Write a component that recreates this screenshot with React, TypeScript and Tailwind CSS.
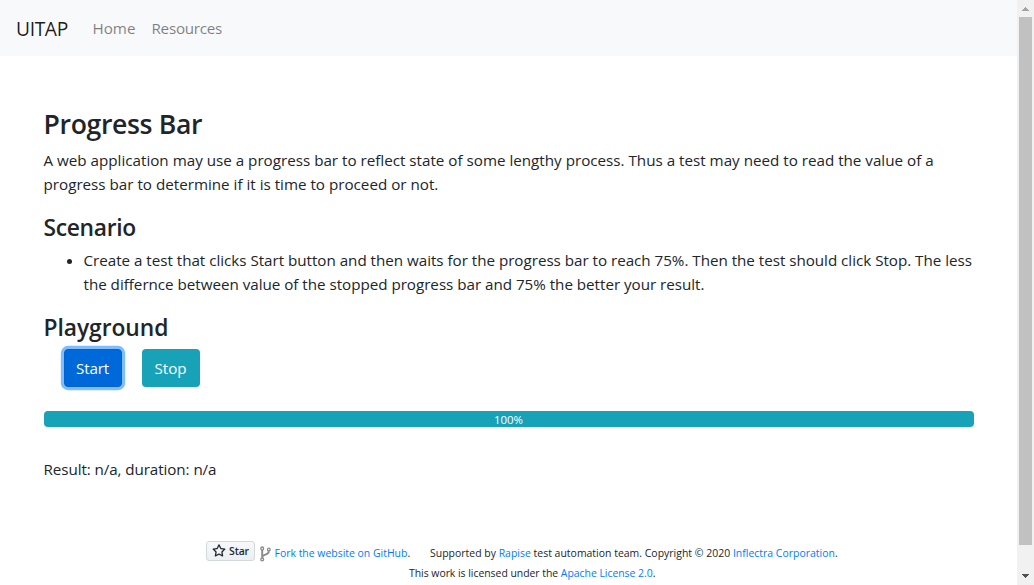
import type { ReactNode } from "react";

function Line({ children }: { children: ReactNode }) {
  return <span className="block whitespace-nowrap">{children}</span>;
}

function Link({ children }: { children: ReactNode }) {
  return <a href="#" className="text-[#007bff]">{children}</a>;
}

function Navbar() {
  return (
    <nav className="flex h-14 items-center bg-[#f8f9fa] px-4">
      <a href="#" className="w-[60px] pt-[2px] text-[19.2px] tracking-[-0.35px] text-black/90">UITAP</a>
      <ul className="flex pl-[16.5px] text-[15.2px] text-black/50">
        <li className="w-[59px]"><a href="#">Home</a></li>
        <li className="tracking-[-0.25px]"><a href="#">Resources</a></li>
      </ul>
    </nav>
  );
}

function StarIcon() {
  return (
    <svg viewBox="0 0 16 16" className="size-3.5" fill="#24292f">
      <path d="M8 .25a.75.75 0 0 1 .673.418l1.882 3.815 4.21.612a.75.75 0 0 1 .416 1.279l-3.046 2.97.719 4.192a.751.751 0 0 1-1.088.791L8 12.347l-3.766 1.98a.75.75 0 0 1-1.088-.79l.72-4.194L.818 6.374a.75.75 0 0 1 .416-1.28l4.21-.611L7.327.668A.75.75 0 0 1 8 .25Zm0 2.445L6.615 5.5a.75.75 0 0 1-.564.41l-3.097.45 2.24 2.184a.75.75 0 0 1 .216.664l-.528 3.084 2.769-1.456a.75.75 0 0 1 .698 0l2.77 1.456-.53-3.084a.75.75 0 0 1 .216-.664l2.24-2.183-3.096-.45a.75.75 0 0 1-.564-.41L8 2.694Z" />
    </svg>
  );
}

function ForkIcon() {
  return (
    <svg viewBox="0 0 11 16" className="h-4 w-[11px]" fill="none" stroke="#8a8a8a" strokeWidth="1.3">
      <circle cx="2.2" cy="2.4" r="1.4" />
      <circle cx="8.8" cy="3.6" r="1.4" />
      <circle cx="2.2" cy="13.4" r="1.4" />
      <path strokeWidth="1.9" d="M2.2 4v7.8M8.8 5.2C8.8 9.6 2.6 7.8 2.3 11.2" />
    </svg>
  );
}

function Scrollbar() {
  return (
    <div className="flex w-[17px] flex-col items-center bg-[#f1f1f1]">
      <svg viewBox="0 0 17 17" className="size-[17px]" fill="#a3a3a3" shapeRendering="crispEdges">
        <path d="M8 7h1v1h1v1h1v1h1v1H5v-1h1V9h1V8h1z" />
      </svg>
      <div className="h-[528px] w-[13px] bg-[#c1c1c1]" />
      <div className="flex-1" />
      <svg viewBox="0 0 17 17" className="size-[17px]" fill="#505050" shapeRendering="crispEdges">
        <path d="M5 6h7v1h-1v1h-1v1H9v1H8V9H7V8H6V7H5z" />
      </svg>
    </div>
  );
}

export default function App() {
  return (
    <div className="flex h-[585px] w-[1034px] overflow-hidden bg-white font-['Open_Sans','Liberation_Sans',sans-serif] text-[15.2px] leading-6 text-[#212529]">
      <div className="flex w-[1017px] flex-col">
        <Navbar />
        <main className="flex flex-col px-[43.5px] pt-[51px]">
          <h3 className="mb-[7px] text-[26.6px] leading-[34px] font-semibold tracking-[-0.35px]">Progress Bar</h3>
          <p className="mb-[18px]">
            <Line>A web application may use a progress bar to reflect state of some lengthy process. Thus a test may need to read the value of a</Line>
            <Line>progress bar to determine if it is time to proceed or not.</Line>
          </p>
          <h4 className="mb-[6px] text-[22.8px] leading-7 font-semibold tracking-[-0.3px]">Scenario</h4>
          <ul className="mb-[18px] list-disc pl-10 tracking-[-0.022px]">
            <li>
              <Line>Create a test that clicks Start button and then waits for the progress bar to reach 75%. Then the test should click Stop. The less</Line>
              <Line>the differnce between value of the stopped progress bar and 75% the better your result.</Line>
            </li>
          </ul>
          <h4 className="mb-[7px] text-[22.8px] leading-7 font-semibold tracking-[-0.05px]">Playground</h4>
          <div className="flex gap-5 pl-5">
            <button className="h-[38px] w-[58px] rounded border border-[#0062cc] bg-[#0069d9] tracking-[-0.15px] text-white shadow-[0_0_0_3.2px_rgba(0,123,255,0.5)]">Start</button>
            <button className="h-[38px] w-[58px] rounded bg-[#17a2b8] text-white">Stop</button>
          </div>
          <div className="mt-6 h-4 w-[930px] rounded bg-[#17a2b8] text-center text-[11.4px] leading-[17px] text-white">100%</div>
          <p className="mt-[30px] tracking-[-0.08px]">Result: n/a, duration: n/a</p>
        </main>
        <footer className="mt-[60px] text-[10.45px] leading-5">
          <div className="flex items-start pl-[206px] whitespace-nowrap">
            <a href="#" className="flex h-5 w-[49px] items-center gap-[3px] rounded-[3px] border border-[#d5d8da] bg-linear-to-b from-[#f6f8fa] to-[#ebf0f4] pl-[5px] font-semibold tracking-[-0.1px] text-[#24292f]">
              <StarIcon />
              <span>Star</span>
            </a>
            <span className="ml-[5px] flex pt-[5px]"><ForkIcon /></span>
            <span className="ml-[3.5px] w-[155.5px] pt-[2px]"><Link>Fork the website on GitHub</Link>.</span>
            <span className="pt-[2px] tracking-[0.015px]">Supported by <Link>Rapise</Link> test automation team. Copyright © 2020 <Link>Inflectra Corporation</Link>.</span>
          </div>
          <p className="pl-[409px] tracking-[-0.03px] whitespace-nowrap">This work is licensed under the <Link>Apache License 2.0</Link>.</p>
        </footer>
      </div>
      <Scrollbar />
    </div>
  );
}
